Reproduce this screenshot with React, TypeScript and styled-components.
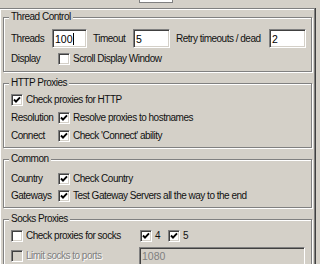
import React from 'react';
import styled, { createGlobalStyle } from 'styled-components';

const GlobalStyle = createGlobalStyle`
  * { box-sizing: border-box; }
  body { margin: 0; background: #d4d0c8; }
`;

const Window = styled.div`
  width: 320px;
  height: 264px;
  overflow: hidden;
  background: #d4d0c8;
  font-family: "Liberation Sans", Arial, sans-serif;
  font-size: 10px;
  letter-spacing: -0.5px;
  line-height: 12px;
  color: #111;
`;

const TopStrip = styled.div`
  height: 8px;
  padding-left: 139px;
`;

const TopField = styled.div`
  width: 34px;
  height: 3px;
  background: #fff;
  border: 1px solid #808080;
  border-top: none;
`;

const Page = styled.div`
  width: 315px;
  height: 256px;
  border-top: 1px solid #808080;
  border-right: 1px solid #808080;
  box-shadow: inset 1px 1px 0 #fff, 1px 0 0 #404040;
  padding: 8px 0 0 3px;
  display: flex;
  flex-direction: column;
  gap: 11px;
`;

const GroupBox = styled.div<{ $pt: number; $pb: number }>`
  position: relative;
  width: 309px;
  flex-shrink: 0;
  border: 1px solid #808080;
  box-shadow: inset 1px 1px 0 #fff, 1px 1px 0 #fff;
  padding: ${({ $pt }) => $pt}px 4px ${({ $pb }) => $pb}px 7px;
  display: flex;
  flex-direction: column;
`;

const Legend = styled.span`
  position: absolute;
  top: -7px;
  left: 5px;
  padding: 0 2px;
  background: #d4d0c8;
`;

const Row = styled.div<{ $h: number; $mt?: number }>`
  display: flex;
  align-items: center;
  height: ${({ $h }) => $h}px;
  margin-top: ${({ $mt }) => $mt || 0}px;
`;

const Cell = styled.div<{ $w: number; $pl?: number }>`
  display: flex;
  align-items: center;
  width: ${({ $w }) => $w}px;
  padding-left: ${({ $pl }) => $pl || 0}px;
  flex-shrink: 0;
  white-space: nowrap;
`;

const TextBox = styled.div<{ $w: number; $disabled?: boolean }>`
  display: flex;
  align-items: center;
  width: ${({ $w }) => $w}px;
  height: 19px;
  flex-shrink: 0;
  padding-left: 2px;
  font-size: 10.5px;
  letter-spacing: 0;
  background: ${({ $disabled }) => ($disabled ? '#d4d0c8' : '#fff')};
  color: ${({ $disabled }) => ($disabled ? '#808080' : '#000')};
  border-top: 1px solid #808080;
  border-left: 1px solid #808080;
  border-bottom: 1px solid #fff;
  border-right: 1px solid #fff;
  box-shadow: inset 1px 1px 0 #404040, inset -1px -1px 0 #d4d0c8;
`;

const Caret = styled.span`
  width: 1px;
  height: 12px;
  background: #000;
`;

const Box = styled.span<{ $disabled?: boolean }>`
  display: inline-flex;
  align-items: center;
  justify-content: center;
  width: 12px;
  height: 12px;
  margin-right: 3px;
  flex-shrink: 0;
  background: ${({ $disabled }) => ($disabled ? '#d4d0c8' : '#fff')};
  border-top: 1px solid #808080;
  border-left: 1px solid #808080;
  border-bottom: 1px solid #fff;
  border-right: 1px solid #fff;
  box-shadow: inset 1px 1px 0 #404040, inset -1px -1px 0 #d4d0c8;
`;

const Caption = styled.span<{ $disabled?: boolean }>`
  color: ${({ $disabled }) => ($disabled ? '#808080' : 'inherit')};
  text-shadow: ${({ $disabled }) => ($disabled ? '1px 1px 0 #fff' : 'none')};
`;

function Check({
  label,
  checked,
  disabled,
}: {
  label: string;
  checked?: boolean;
  disabled?: boolean;
}) {
  return (
    <>
      <Box $disabled={disabled}>
        {checked && (
          <svg width="8" height="8" viewBox="0 0 8 8">
            <polyline
              points="1,3.5 3,5.6 7,1.4"
              fill="none"
              stroke="#000"
              strokeWidth="1.9"
            />
          </svg>
        )}
      </Box>
      <Caption $disabled={disabled}>{label}</Caption>
    </>
  );
}

export default function App() {
  return (
    <Window>
      <GlobalStyle />
      <TopStrip>
        <TopField />
      </TopStrip>
      <Page>
        <GroupBox $pt={11} $pb={3}>
          <Legend>Thread Control</Legend>
          <Row $h={19}>
            <Cell $w={41}>Threads</Cell>
            <TextBox $w={35}>
              100
              <Caret />
            </TextBox>
            <Cell $w={46} $pl={6}>
              Timeout
            </Cell>
            <TextBox $w={37}>5</TextBox>
            <Cell $w={99} $pl={6}>
              Retry timeouts / dead
            </Cell>
            <TextBox $w={37}>2</TextBox>
          </Row>
          <Row $h={18} $mt={2}>
            <Cell $w={47}>Display</Cell>
            <Check label="Scroll Display Window" />
          </Row>
        </GroupBox>

        <GroupBox $pt={7} $pb={2}>
          <Legend>HTTP Proxies</Legend>
          <Row $h={18}>
            <Check label="Check proxies for HTTP" checked />
          </Row>
          <Row $h={18}>
            <Cell $w={47}>Resolution</Cell>
            <Check label="Resolve proxies to hostnames" checked />
          </Row>
          <Row $h={18}>
            <Cell $w={47}>Connect</Cell>
            <Check label="Check 'Connect' ability" checked />
          </Row>
        </GroupBox>

        <GroupBox $pt={10} $pb={3}>
          <Legend>Common</Legend>
          <Row $h={17}>
            <Cell $w={47}>Country</Cell>
            <Check label="Check Country" checked />
          </Row>
          <Row $h={17}>
            <Cell $w={47}>Gateways</Cell>
            <Check label="Test Gateway Servers all the way to the end" checked />
          </Row>
        </GroupBox>

        <GroupBox $pt={7} $pb={0}>
          <Legend>Socks Proxies</Legend>
          <Row $h={18}>
            <Cell $w={129}>
              <Check label="Check proxies for socks" />
            </Cell>
            <Cell $w={28}>
              <Check label="4" checked />
            </Cell>
            <Check label="5" checked />
          </Row>
          <Row $h={20} $mt={1}>
            <Cell $w={128}>
              <Check label="Limit socks to ports" disabled />
            </Cell>
            <TextBox $w={166} $disabled>
              1080
            </TextBox>
          </Row>
        </GroupBox>
      </Page>
    </Window>
  );
}
